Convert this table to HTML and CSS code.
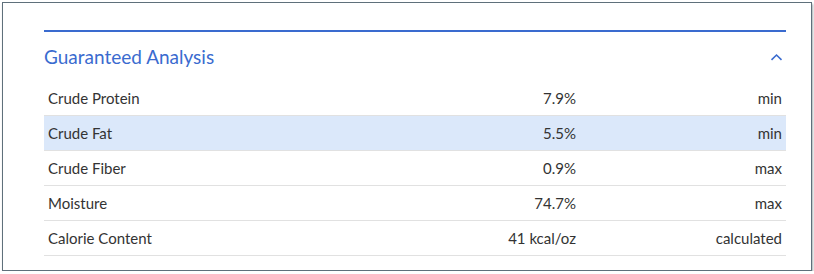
FILE: index.html
```html
<!DOCTYPE html>
<html lang="en">
<head>
<meta charset="utf-8">
<title>Guaranteed Analysis</title>
<link rel="stylesheet" href="styles.css">
</head>
<body>
<section class="card">
  <div class="panel">
    <div class="panel-head">
      <h2 class="panel-title">Guaranteed Analysis</h2>
      <svg class="chevron" width="13" height="8" viewBox="0 0 13 8" aria-hidden="true"><path d="M1.5 6.8 L6.5 2 L11.5 6.8" fill="none" stroke="#3a6bcf" stroke-width="1.6"/></svg>
    </div>
    <div class="rows">
      <div class="row"><span class="name">Crude Protein</span><span class="val">7.9%</span><span class="unit">min</span></div>
      <div class="row hl"><span class="name">Crude Fat</span><span class="val">5.5%</span><span class="unit">min</span></div>
      <div class="row"><span class="name">Crude Fiber</span><span class="val">0.9%</span><span class="unit">max</span></div>
      <div class="row"><span class="name">Moisture</span><span class="val">74.7%</span><span class="unit">max</span></div>
      <div class="row"><span class="name">Calorie Content</span><span class="val">41 kcal/oz</span><span class="unit">calculated</span></div>
    </div>
  </div>
</section>
</body>
</html>
```
FILE: styles.css
```css
html, body {
  margin: 0;
  padding: 0;
  background: #ffffff;
}
body {
  padding: 2px 0 0 2px;
  font-family: Lato, "Liberation Sans", sans-serif;
  color: #333333;
}
.card {
  width: 808px;
  height: 267px;
  border: 1px solid #5f707b;
  box-shadow: 1px 2px 2px rgba(60, 75, 85, 0.45);
  box-sizing: content-box;
  padding: 0;
}
.panel {
  margin: 27px 25px 0 41px;
  border-top: 2px solid #3a6bcf;
}
.panel-head {
  display: flex;
  align-items: center;
  justify-content: space-between;
  height: 49px;
}
.panel-title {
  margin: 0;
  font-size: 19px;
  font-weight: 400;
  color: #3a6bcf;
}
.chevron {
  margin-right: 3px;
}
.rows {
  display: flex;
  flex-direction: column;
}
.row {
  display: grid;
  grid-template-columns: 1fr 150px 206px;
  align-items: center;
  height: 34px;
  border-bottom: 1px solid #e1e1e1;
  font-size: 15px;
  padding: 0 4px;
}
.row.hl {
  background: #dbe8fa;
}
.val, .unit {
  text-align: right;
}
```
